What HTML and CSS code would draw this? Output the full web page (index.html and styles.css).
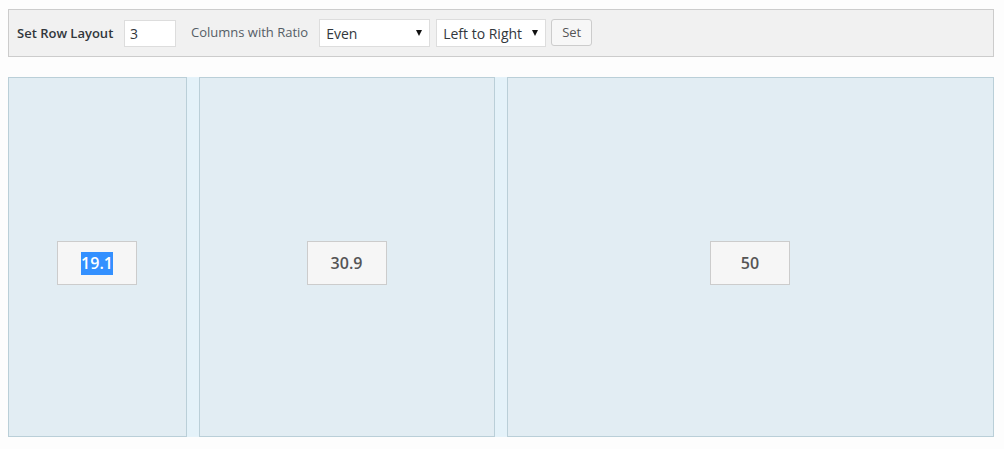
FILE: index.html
```html
<!DOCTYPE html>
<html>
<head>
<meta charset="utf-8">
<link rel="stylesheet" href="styles.css">
</head>
<body>
<div class="wrap">
  <div class="toolbar">
    <span class="label-strong">Set Row Layout</span>
    <input class="num-input" type="text" value="3">
    <span class="label">Columns with Ratio</span>
    <div class="select-wrap select-ratio">
      <select class="select"><option>Even</option></select>
    </div>
    <div class="select-wrap select-dir">
      <select class="select"><option>Left to Right</option></select>
    </div>
    <button class="btn">Set</button>
  </div>
  <div class="row">
    <div class="col col-1"><div class="weight"><span class="selected">19.1</span></div></div>
    <div class="col col-2"><div class="weight">30.9</div></div>
    <div class="col col-3"><div class="weight">50</div></div>
  </div>
</div>
</body>
</html>
```
FILE: styles.css
```css
html, body {
  margin: 0;
  padding: 0;
  background: #fdfdfd;
  font-family: "Open Sans", "Liberation Sans", sans-serif;
}

.wrap {
  padding: 9px 10px 0 8px;
}

.toolbar {
  box-sizing: border-box;
  height: 48px;
  border: 1px solid #cccccc;
  background: #f1f1f1;
  padding: 0 8px;
  display: flex;
  align-items: center;
}

.label-strong {
  width: 96px;
  white-space: nowrap;
  font-size: 13px;
  font-weight: 600;
  color: #32373c;
  margin-right: 11px;
  margin-top: -1px;
}

.label {
  font-size: 13px;
  color: #555d66;
  margin-right: 11px;
  margin-top: -3px;
}

.num-input {
  box-sizing: border-box;
  width: 52px;
  height: 27px;
  border: 1px solid #dddddd;
  background: #ffffff;
  font-family: "Open Sans", "Liberation Sans", sans-serif;
  font-size: 14px;
  color: #32373c;
  padding: 0 5px;
  margin: 0 15px 0 0;
  outline: none;
}

.select-wrap {
  position: relative;
  margin-right: 6px;
}

.select-wrap::after {
  content: "";
  position: absolute;
  right: 8px;
  top: 11px;
  border-left: 3.5px solid transparent;
  border-right: 3.5px solid transparent;
  border-top: 6px solid #111111;
  pointer-events: none;
}

.select {
  box-sizing: border-box;
  -webkit-appearance: none;
  appearance: none;
  height: 28px;
  border: 1px solid #dddddd;
  border-radius: 0;
  background: #ffffff;
  font-family: "Open Sans", "Liberation Sans", sans-serif;
  font-size: 14px;
  color: #32373c;
  padding: 0 6px;
  margin: 0;
  outline: none;
}

.select-ratio .select {
  width: 111px;
}

.select-dir {
  margin-right: 5px;
}

.select-dir .select {
  width: 110px;
}

.btn {
  box-sizing: border-box;
  width: 41px;
  height: 27px;
  border: 1px solid #cccccc;
  border-radius: 3px;
  background: #f7f7f7;
  font-family: "Open Sans", "Liberation Sans", sans-serif;
  font-size: 13px;
  color: #555555;
  padding: 0 0 2px;
  margin: -1px 0 0;
}

.row {
  margin-top: 20px;
  height: 360px;
  display: flex;
  gap: 12px;
  background: #e4f2f9;
}

.col {
  box-sizing: border-box;
  height: 360px;
  border: 1px solid #bacfd8;
  background: #e2edf3;
  display: flex;
  align-items: center;
  justify-content: center;
  padding-top: 12px;
  padding-right: 1px;
}

.col-1 { width: 179px; }
.col-2 { width: 296px; }
.col-3 { width: 487px; }

.weight {
  box-sizing: border-box;
  width: 80px;
  height: 44px;
  border: 1px solid #cccccc;
  background: #f6f6f6;
  display: flex;
  align-items: center;
  justify-content: center;
  font-size: 16px;
  font-weight: 600;
  color: #555555;
}

.selected {
  background: #3390ff;
  color: #ffffff;
  line-height: 23px;
}
```
